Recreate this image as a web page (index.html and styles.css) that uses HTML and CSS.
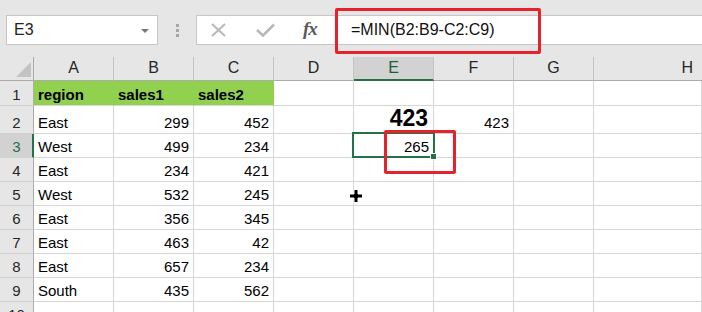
FILE: index.html
```html
<!DOCTYPE html>
<html>
<head>
<meta charset="utf-8">
<link rel="stylesheet" href="styles.css">
</head>
<body>
<div class="page">
  <div class="toolbar">
    <div class="namebox"><span class="name">E3</span><span class="caret"></span></div>
    <div class="dots"><i></i><i></i><i></i></div>
    <div class="fbtns">
      <svg class="ico" width="17" height="14" viewBox="0 0 17 14"><path d="M2 1 L15 13 M15 1 L2 13" stroke="#b8b8b8" stroke-width="2" fill="none"/></svg>
      <svg class="ico chk" width="19" height="14" viewBox="0 0 19 14"><path d="M1 7 L7 12.5 L18 1.5" stroke="#b8b8b8" stroke-width="2.6" fill="none"/></svg>
      <span class="fx">fx</span>
    </div>
    <div class="finput">=MIN(B2:B9-C2:C9)</div>
  </div>
  <div class="sheet">
    <div class="corner"><span class="tri"></span></div>
    <div class="ch">A</div><div class="ch">B</div><div class="ch">C</div><div class="ch">D</div>
    <div class="ch sel">E</div><div class="ch">F</div><div class="ch">G</div><div class="ch h">H</div>

    <div class="rh">1</div>
    <div class="c g b">region</div><div class="c g b">sales1</div><div class="c g b">sales2</div>
    <div class="c"></div><div class="c"></div><div class="c"></div><div class="c"></div><div class="c"></div>

    <div class="rh">2</div>
    <div class="c">East</div><div class="c n">299</div><div class="c n">452</div>
    <div class="c"></div><div class="c n big">423</div><div class="c n">423</div><div class="c"></div><div class="c"></div>

    <div class="rh sel">3</div>
    <div class="c">West</div><div class="c n">499</div><div class="c n">234</div>
    <div class="c"></div><div class="c n">265</div><div class="c"></div><div class="c"></div><div class="c"></div>

    <div class="rh">4</div>
    <div class="c">East</div><div class="c n">234</div><div class="c n">421</div>
    <div class="c"></div><div class="c"></div><div class="c"></div><div class="c"></div><div class="c"></div>

    <div class="rh">5</div>
    <div class="c">West</div><div class="c n">532</div><div class="c n">245</div>
    <div class="c"></div><div class="c"></div><div class="c"></div><div class="c"></div><div class="c"></div>

    <div class="rh">6</div>
    <div class="c">East</div><div class="c n">356</div><div class="c n">345</div>
    <div class="c"></div><div class="c"></div><div class="c"></div><div class="c"></div><div class="c"></div>

    <div class="rh">7</div>
    <div class="c">East</div><div class="c n">463</div><div class="c n">42</div>
    <div class="c"></div><div class="c"></div><div class="c"></div><div class="c"></div><div class="c"></div>

    <div class="rh">8</div>
    <div class="c">East</div><div class="c n">657</div><div class="c n">234</div>
    <div class="c"></div><div class="c"></div><div class="c"></div><div class="c"></div><div class="c"></div>

    <div class="rh">9</div>
    <div class="c">South</div><div class="c n">435</div><div class="c n">562</div>
    <div class="c"></div><div class="c"></div><div class="c"></div><div class="c"></div><div class="c"></div>

    <div class="rh">10</div>
    <div class="c"></div><div class="c"></div><div class="c"></div>
    <div class="c"></div><div class="c"></div><div class="c"></div><div class="c"></div><div class="c"></div>
  </div>

  <div class="selbox"><span class="handle"></span></div>
  <div class="redbox formula-mark"></div>
  <div class="redbox cell-mark"></div>
  <svg class="cursor" width="14" height="14" viewBox="0 0 14 14"><path d="M5 0.5 H9 V5 H13.5 V9 H9 V13.5 H5 V9 H0.5 V5 H5 Z" fill="#000" stroke="#fff" stroke-width="1"/></svg>
</div>
</body>
</html>
```

FILE: styles.css
```css
* { box-sizing: border-box; }
html, body { margin: 0; padding: 0; }
body {
  width: 702px;
  height: 312px;
  overflow: hidden;
  background: #fff;
  font-family: "Liberation Sans", Arial, sans-serif;
  color: #000;
}
.page { position: relative; width: 702px; height: 312px; overflow: hidden; }

.toolbar {
  height: 57px;
  background: #e6e6e6;
  display: flex;
  align-items: flex-start;
  padding-top: 15px;
  padding-left: 6px;
}
.namebox {
  width: 152px;
  height: 30px;
  background: #fff;
  border: 1px solid #c6c6c6;
  display: flex;
  align-items: center;
  justify-content: space-between;
  padding: 0 8px 0 7px;
}
.name { font-size: 16px; color: #222; }
.caret {
  width: 0; height: 0;
  border-left: 4px solid transparent;
  border-right: 4px solid transparent;
  border-top: 4px solid #7a7a7a;
  margin-top: 1px;
}
.dots {
  width: 38px;
  height: 30px;
  display: flex;
  flex-direction: column;
  align-items: center;
  justify-content: center;
  gap: 2px;
}
.dots i { display: block; width: 3px; height: 3px; background: #a6a6a6; }
.fbtns {
  width: 141px;
  height: 30px;
  background: #fff;
  border: 1px solid #c6c6c6;
  border-right: none;
  display: flex;
  align-items: center;
  padding-left: 13px;
}
.ico { display: block; }
.chk { margin-left: 29px; }
.fx {
  margin-left: 28px;
  font-family: "Liberation Serif", "Times New Roman", serif;
  font-style: italic;
  font-weight: bold;
  font-size: 19px;
  color: #5a5a5a;
  letter-spacing: -1px;
  line-height: 1;
  margin-top: -3px;
}
.finput {
  flex: 1;
  height: 30px;
  background: #fff;
  border: 1px solid #c6c6c6;
  border-right: none;
  font-size: 16px;
  color: #111;
  padding-left: 13px;
  line-height: 28px;
}

.sheet {
  display: grid;
  grid-template-columns: 34px repeat(7, 80px) 108px;
  grid-template-rows: 24px 25px 28px repeat(8, 24px);
}
.corner {
  background: #e6e6e6;
  border-right: 1px solid #ababab;
  border-bottom: 1px solid #ababab;
  position: relative;
}
.tri {
  position: absolute;
  right: 2px;
  bottom: 3px;
  width: 0; height: 0;
  border-left: 15px solid transparent;
  border-bottom: 15px solid #c3c3c3;
}
.ch {
  background: #e6e6e6;
  border-right: 1px solid #c5c5c5;
  border-bottom: 1px solid #ababab;
  display: flex;
  align-items: center;
  justify-content: center;
  font-size: 16px;
  color: #262626;
  padding-bottom: 1px;
}
.ch.h { justify-content: flex-end; padding-right: 9px; border-right: none; }
.ch.sel {
  background: #d2d2d2;
  border-bottom: 2px solid #217346;
  color: #1d5c3a;
  padding-top: 1px;
}
.rh {
  background: #e6e6e6;
  border-right: 1px solid #ababab;
  border-bottom: 1px solid #d0d0d0;
  display: flex;
  align-items: flex-end;
  justify-content: center;
  font-size: 15px;
  color: #262626;
  padding-bottom: 2px;
}
.rh.sel {
  background: #d2d2d2;
  border-right: 2px solid #217346;
  color: #217346;
  padding-left: 1px;
}
.c {
  border-right: 1px solid #d6d6d6;
  border-bottom: 1px solid #d6d6d6;
  display: flex;
  align-items: flex-end;
  font-size: 15px;
  padding: 0 4px 2px 4px;
  white-space: nowrap;
  overflow: visible;
}
.c.n { justify-content: flex-end; }
.c.g { background: #92d050; border-right-color: #92d050; }
.c.b { font-weight: bold; }
.c.big { font-size: 23px; font-weight: bold; padding-bottom: 1px; padding-right: 5px; }

.selbox {
  position: absolute;
  left: 352px;
  top: 132px;
  width: 83px;
  height: 26px;
  border: 2px solid #217346;
}
.handle {
  position: absolute;
  right: -4px;
  bottom: -4px;
  width: 7px;
  height: 7px;
  background: #217346;
  border: 1px solid #fff;
}
.redbox {
  position: absolute;
  border: 3px solid #e6232c;
  border-radius: 2px;
}
.formula-mark { left: 335px; top: 8px; width: 206px; height: 46px; }
.cell-mark { left: 384px; top: 130px; width: 72px; height: 44px; }
.cursor { position: absolute; left: 349px; top: 189px; }
```
